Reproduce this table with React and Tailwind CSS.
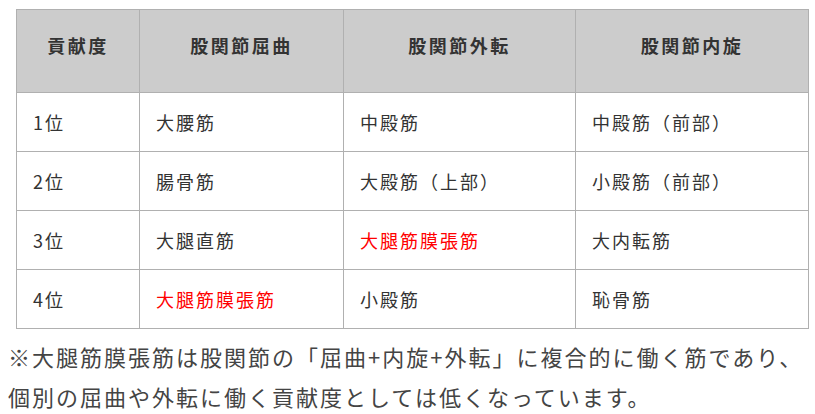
const head = ['貢献度', '股関節屈曲', '股関節外転', '股関節内旋']

const rows = [
  ['1位', '大腰筋', '中殿筋', '中殿筋（前部）'],
  ['2位', '腸骨筋', '大殿筋（上部）', '小殿筋（前部）'],
  ['3位', '大腿直筋', '*大腿筋膜張筋', '大内転筋'],
  ['4位', '*大腿筋膜張筋', '小殿筋', '恥骨筋'],
]

const widths = ['w-[123px]', 'w-[204px]', 'w-[232px]', 'w-[233px]']

export default function App() {
  return (
    <div
      className="min-h-screen bg-white pl-[16px] pr-[7px] pt-[9px] text-[#333]"
      style={{ fontFamily: '"Noto Sans CJK JP", "Noto Sans", sans-serif' }}
    >
      <table className="w-[793px] table-fixed border-collapse">
        <thead>
          <tr>
            {head.map((h, i) => (
              <th
                key={h}
                className={`${widths[i]} h-[83px] border border-[#b0b0b0] bg-[#cccccc] pb-[12px] text-center text-[18px] font-bold tracking-[2.5px] text-[#333]`}
              >
                {h}
              </th>
            ))}
          </tr>
        </thead>
        <tbody>
          {rows.map((r) => (
            <tr key={r[0]}>
              {r.map((c, i) => {
                const red = c.startsWith('*')
                return (
                  <td
                    key={i}
                    className={`h-[59px] border border-[#b0b0b0] px-[16px] text-[18px] tracking-[2px] ${
                      red ? 'text-[#ff0000]' : 'text-[#333]'
                    }`}
                  >
                    {red ? c.slice(1) : c}
                  </td>
                )
              })}
            </tr>
          ))}
        </tbody>
      </table>
      <p className="-ml-[8px] mt-[7px] text-[22px] leading-[40px] tracking-[2px] text-[#444]">
        ※大腿筋膜張筋は股関節の「屈曲+内旋+外転」に複合的に働く筋であり、個別の屈曲や外転に働く貢献度としては低くなっています。
      </p>
    </div>
  )
}
